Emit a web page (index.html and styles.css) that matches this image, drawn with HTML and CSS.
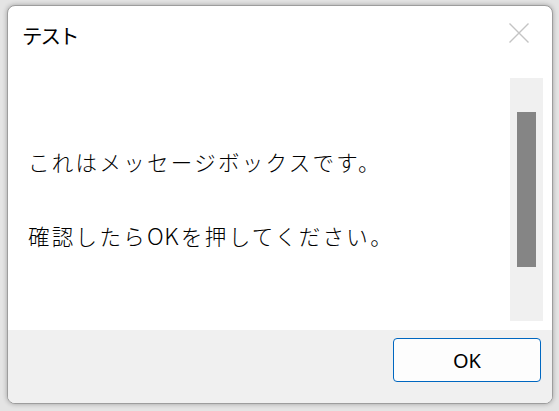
FILE: index.html
```html
<!DOCTYPE html>
<html lang="ja">
<head>
<meta charset="utf-8">
<link rel="stylesheet" href="styles.css">
</head>
<body>
<div class="window">
  <div class="titlebar">
    <span class="title">テスト</span>
    <span class="close">
      <svg width="20" height="20" viewBox="0 0 20 20"><path d="M0.5 0.5 L19.5 19.5 M19.5 0.5 L0.5 19.5" stroke="#c4c4c4" stroke-width="1.4" fill="none"/></svg>
    </span>
  </div>
  <div class="main">
    <div class="message">
      <p class="line">これはメッセージボックスです。</p>
      <p class="line second">確認したら<span class="latin">OK</span>を押してください。</p>
    </div>
    <div class="scrollbar"><div class="thumb"></div></div>
  </div>
  <div class="footer">
    <button class="ok">OK</button>
  </div>
</div>
</body>
</html>
```
FILE: styles.css
```css
html, body {
  margin: 0;
  padding: 0;
}
body {
  width: 559px;
  height: 411px;
  background: #e4e4e4;
  font-family: "Noto Sans CJK JP", "Noto Sans", sans-serif;
  color: #000;
  overflow: hidden;
}
.window {
  box-sizing: border-box;
  margin: 5px 0 0 7px;
  width: 546px;
  height: 399px;
  background: #fff;
  border: 1px solid #9d9d9d;
  border-radius: 8px;
  box-shadow: 0 0 5px rgba(0, 0, 0, 0.3);
  display: flex;
  flex-direction: column;
  overflow: hidden;
}
.titlebar {
  height: 72px;
  flex: none;
  display: flex;
  align-items: flex-start;
  justify-content: space-between;
  padding: 0 23px 0 14px;
}
.title {
  font-size: 20.5px;
  line-height: 24px;
  margin-top: 17px;
  letter-spacing: -2px;
}
.close {
  display: block;
  margin-top: 17px;
  width: 20px;
  height: 20px;
}
.close svg { display: block; }
.main {
  flex: 1;
  display: flex;
  justify-content: space-between;
  padding-bottom: 9px;
}
.message {
  padding: 69px 0 0 20px;
}
.line {
  margin: 0;
  font-size: 21.5px;
  font-weight: 300;
  line-height: 30px;
  letter-spacing: 2.3px;
  white-space: nowrap;
}
.latin {
  font-size: 23px;
  letter-spacing: 0.5px;
  margin-right: 2px;
}
.second {
  margin-top: 43px;
}
.scrollbar {
  width: 33px;
  margin-right: 9px;
  background: #f0f0f0;
  padding: 34px 7px 0 7px;
  box-sizing: border-box;
}
.thumb {
  height: 155px;
  background: #858585;
}
.footer {
  height: 73px;
  flex: none;
  background: #f0f0f0;
  display: flex;
  justify-content: flex-end;
  align-items: flex-start;
  padding: 8px 11px 0 0;
  box-sizing: border-box;
}
.ok {
  width: 148px;
  height: 44px;
  background: #fdfdfd;
  border: 1px solid #0067c0;
  border-radius: 4px;
  font-family: "Noto Sans", "Noto Sans CJK JP", sans-serif;
  font-size: 20px;
  color: #000;
  padding: 0;
}
```
